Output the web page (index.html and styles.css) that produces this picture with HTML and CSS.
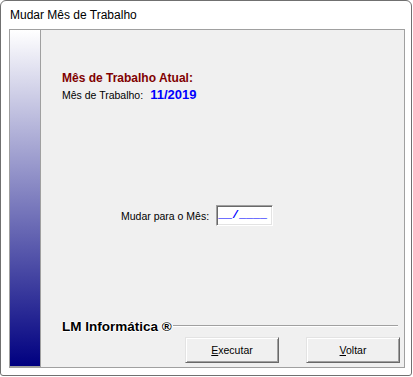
FILE: index.html
```html
<!DOCTYPE html>
<html lang="pt">
  <head>
    <meta charset="utf-8" />
    <title>Mudar Mês de Trabalho</title>
    <link rel="stylesheet" href="styles.css">
  </head>
  <body>
    <div class="window">
      <div class="title-bar">Mudar Mês de Trabalho</div>
      <div class="client">
        <div class="side-bar"></div>
        <div class="content">
          <div class="label-current">Mês de Trabalho Atual:</div>
          <div class="month-row">
            <span>Mês de Trabalho:</span>
            <span class="month-value">11/2019</span>
          </div>
          <div class="change-row">
            <label for="month">Mudar para o Mês:</label>
            <div id="month" class="month-input">__/____</div>
          </div>
          <div class="footer">
            <div class="brand">LM Informática ®</div>
            <div class="btn-container">
              <button class="btn"><u>E</u>xecutar</button>
              <button class="btn"><u>V</u>oltar</button>
            </div>
          </div>
        </div>
      </div>
    </div>
  </body>
</html>
```

FILE: styles.css
```css
html, body {
  margin: 0;
  background-color: #ffffff;
}

body {
  font-family: "Liberation Sans", Arial, sans-serif;
  font-size: 10.5px;
  color: #000000;
}

.window {
  box-sizing: border-box;
  width: 412px;
  height: 376px;
  border: 1px solid #707070;
  border-radius: 6px 6px 3px 3px;
  background-color: #ffffff;
  padding: 0 6px 7px 8px;
  display: flex;
  flex-direction: column;
}

.title-bar {
  height: 28px;
  line-height: 28px;
  padding-left: 1px;
  font-size: 12px;
  color: #000000;
}

.client {
  flex: 1;
  display: flex;
  border: 1px solid #a0a0a0;
  background-color: #f0f0f0;
}

.side-bar {
  width: 30px;
  border-right: 1px solid #a0a0a0;
  border-bottom: 1px solid #a0a0a0;
  background: linear-gradient(#ffffff, #000080);
}

.content {
  flex: 1;
  display: flex;
  flex-direction: column;
  padding: 41px 4px 4px 21px;
}

.label-current {
  font-size: 12px;
  line-height: 14px;
  font-weight: bold;
  color: #800000;
}

.month-row {
  margin-top: 3px;
  display: flex;
  align-items: baseline;
  gap: 7px;
  line-height: 14px;
}

.month-value {
  font-size: 13px;
  font-weight: bold;
  color: #0000ff;
}

.change-row {
  margin-top: 103px;
  margin-left: 59px;
  display: flex;
  align-items: center;
  gap: 7px;
}

.month-input {
  box-sizing: border-box;
  width: 57px;
  height: 21px;
  padding: 1px 0 0 1px;
  border: 1px solid;
  border-color: #a0a0a0 #ffffff #ffffff #a0a0a0;
  box-shadow: inset 1px 1px #696969, inset -1px -1px #e3e3e3;
  background-color: #ffffff;
  font-family: "Liberation Mono", monospace;
  font-size: 11.67px;
  font-weight: bold;
  line-height: 16px;
  color: #0000ff;
}

.footer {
  margin-top: auto;
}

.brand {
  display: flex;
  align-items: center;
  height: 16px;
  font-size: 13.5px;
  font-weight: bold;
  color: #000000;
  text-shadow: 1px 0 #ffffff, -1px 0 #ffffff, 0 1px #ffffff, 0 -1px #ffffff;
}

.brand::after {
  content: "";
  flex: 1;
  margin: 0 2px 0 1px;
  border-top: 1px solid #a0a0a0;
  border-bottom: 1px solid #ffffff;
}

.btn-container {
  margin-top: 3px;
  display: flex;
  justify-content: flex-end;
  gap: 27px;
}

.btn {
  box-sizing: border-box;
  width: 94px;
  height: 26px;
  margin: 0;
  padding: 0;
  border: 1px solid;
  border-color: #e3e3e3 #696969 #696969 #e3e3e3;
  box-shadow: inset 1px 1px #ffffff, inset -1px -1px #a0a0a0;
  background-color: #f0f0f0;
  font-family: "Liberation Sans", Arial, sans-serif;
  font-size: 10.5px;
  color: #000000;
}
```
